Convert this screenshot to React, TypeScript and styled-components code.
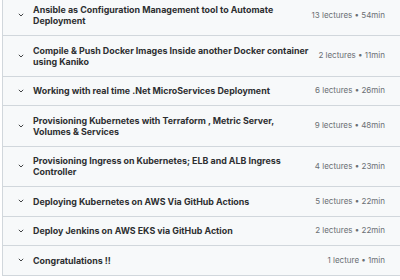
import React from 'react';
import styled, { createGlobalStyle } from 'styled-components';

const GlobalStyle = createGlobalStyle`
  html, body { margin: 0; padding: 0; background: #ffffff; overflow: hidden; }
  body { font-family: Inter, "Noto Sans", sans-serif; }
`;

interface Section {
  title: string;
  lectures: number;
  minutes: number;
}

const sections: Section[] = [
  { title: 'Ansible as Configuration Management tool to Automate Deployment', lectures: 13, minutes: 54 },
  { title: 'Compile & Push Docker Images Inside another Docker container using Kaniko', lectures: 2, minutes: 11 },
  { title: 'Working with real time .Net MicroServices Deployment', lectures: 6, minutes: 26 },
  { title: 'Provisioning Kubernetes with Terraform , Metric Server, Volumes & Services', lectures: 9, minutes: 48 },
  { title: 'Provisioning Ingress on Kubernetes; ELB and ALB Ingress Controller', lectures: 4, minutes: 23 },
  { title: 'Deploying Kubernetes on AWS Via GitHub Actions', lectures: 5, minutes: 22 },
  { title: 'Deploy Jenkins on AWS EKS via GitHub Action', lectures: 2, minutes: 22 },
  { title: 'Congratulations !!', lectures: 1, minutes: 1 },
];

const Curriculum = styled.div`
  margin: -4.5px 0 0 2px;
  width: 398px;
  border: 1px solid #d1d7dc;
  border-top: none;
  background: #f7f9fa;
`;

const Row = styled.div`
  display: flex;
  align-items: center;
  gap: 9px;
  padding: 8.75px 16px 8.75px 15px;
  border-top: 1px solid #d1d7dc;

  &:first-child { border-top: none; }
`;

const Chevron = styled.svg`
  flex: none;
  width: 6px;
  height: 6px;
  color: #2d2f31;
`;

const Title = styled.div`
  flex: 1;
  max-width: 280px;
  font-size: 8.9px;
  line-height: 11px;
  font-weight: 700;
  color: #2d2f31;
`;

const Meta = styled.div`
  margin-left: auto;
  white-space: nowrap;
  font-size: 8px;
  line-height: 11px;
  color: #6a6f73;
`;

export default function App() {
  return (
    <>
      <GlobalStyle />
      <Curriculum>
        {sections.map(s => (
          <Row key={s.title}>
            <Chevron viewBox="0 0 6 6">
              <polyline points="0.8,1.8 3,4 5.2,1.8" fill="none" stroke="currentColor" strokeWidth="0.9" />
            </Chevron>
            <Title>{s.title}</Title>
            <Meta>
              {s.lectures} {s.lectures === 1 ? 'lecture' : 'lectures'} • {s.minutes}min
            </Meta>
          </Row>
        ))}
      </Curriculum>
    </>
  );
}
